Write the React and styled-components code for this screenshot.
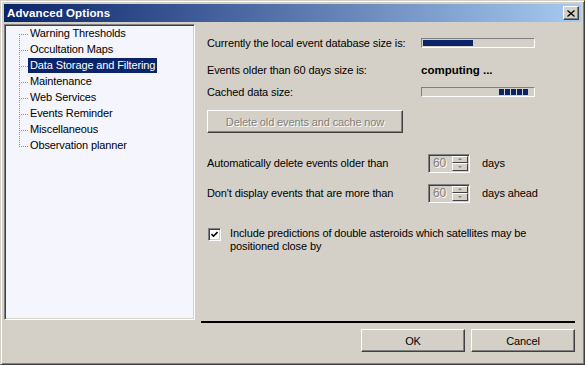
import styled, { createGlobalStyle } from 'styled-components';

const GlobalStyle = createGlobalStyle`
  html, body {
    margin: 0;
    padding: 0;
    background: #d4d0c8;
  }
  body {
    font-family: "Liberation Sans", Arial, sans-serif;
    font-size: 11px;
    letter-spacing: -0.12px;
    color: #000;
  }
`;

const Window = styled.div`
  width: 585px;
  height: 365px;
  box-sizing: border-box;
  display: flex;
  flex-direction: column;
  background: #d4d0c8;
  border: 1px solid;
  border-color: #d4d0c8 #404040 #404040 #d4d0c8;
  box-shadow: inset 1px 1px #fff, inset -1px -1px #808080;
  padding: 3px;
`;

const TitleBar = styled.div`
  height: 18px;
  flex: none;
  display: flex;
  align-items: center;
  justify-content: space-between;
  padding: 0 2px 0 3px;
  background: linear-gradient(to right, #0a246a, #a6caf0);
`;

const Title = styled.span`
  color: #fff;
  font-weight: 700;
  font-size: 11.5px;
  letter-spacing: 0.1px;
`;

const CloseButton = styled.button`
  width: 16px;
  height: 14px;
  padding: 0;
  display: flex;
  align-items: center;
  justify-content: center;
  background: #d4d0c8;
  border: 1px solid;
  border-color: #fff #404040 #404040 #fff;
  box-shadow: inset -1px -1px #808080;
`;

const Body = styled.div`
  flex: 1;
  display: flex;
  padding-top: 2px;
  min-height: 0;
`;

const Tree = styled.ul`
  width: 191px;
  height: 296px;
  box-sizing: border-box;
  flex: none;
  margin: 0;
  list-style: none;
  padding: 1px 0 0 14px;
  background: #f4f5fd;
  border: 1px solid;
  border-color: #808080 #fff #fff #808080;
  box-shadow: inset 1px 1px #404040, inset -1px -1px #d4d0c8;
`;

const TreeItem = styled.li`
  display: flex;
  align-items: flex-start;
  height: 16px;
`;

const Connector = styled.span`
  width: 9px;
  height: 16px;
  flex: none;
  background-image:
    repeating-linear-gradient(to right, #909090 0 1px, transparent 1px 2px),
    repeating-linear-gradient(to bottom, #909090 0 1px, transparent 1px 2px);
  background-size: 9px 1px, 1px ${(p) => (p.$first || p.$last ? 8 : 16)}px;
  background-position: 0 8px, 0 ${(p) => (p.$first ? 8 : 0)}px;
  background-repeat: no-repeat;
`;

const ItemLabel = styled.span`
  height: 15px;
  line-height: 15px;
  padding: 0 2px;
  white-space: nowrap;
  background: ${(p) => (p.$selected ? '#0a246a' : 'transparent')};
  color: ${(p) => (p.$selected ? '#fff' : '#000')};
`;

const RightPane = styled.div`
  flex: 1;
  display: flex;
  flex-direction: column;
`;

const Content = styled.div`
  flex: 1;
  padding: 9px 0 0 12px;
`;

const Row = styled.div`
  display: flex;
  align-items: center;
  height: 20px;
  margin-top: ${(p) => p.$mt || 0}px;
  white-space: nowrap;
`;

const Label = styled.span`
  width: ${(p) => p.$w}px;
  flex: none;
`;

const Computing = styled.span`
  font-weight: 700;
  font-size: 11.5px;
  letter-spacing: 0;
`;

const Progress = styled.div`
  width: 114px;
  height: 10px;
  box-sizing: border-box;
  padding: 1px;
  display: flex;
  justify-content: ${(p) => (p.$end ? 'flex-end' : 'flex-start')};
  gap: 1px;
  border: 1px solid;
  border-color: #808080 #fff #fff #808080;
`;

const ProgressFill = styled.div`
  height: 100%;
  background: #0a246a;
`;

const Chunk = styled.div`
  width: 5px;
  height: 100%;
  background: #0a246a;
`;

const ChunkTrail = styled.div`
  width: 4px;
`;

const Button = styled.button`
  width: ${(p) => p.$w}px;
  height: 23px;
  box-sizing: border-box;
  padding: 0;
  margin-top: ${(p) => p.$mt || 0}px;
  font-family: "Liberation Sans", Arial, sans-serif;
  font-size: 11px;
  letter-spacing: -0.12px;
  background: #d4d0c8;
  color: ${(p) => (p.disabled ? '#808080' : '#000')};
  text-shadow: ${(p) => (p.disabled ? '1px 1px #fff' : 'none')};
  border: 1px solid;
  border-color: #fff #404040 #404040 #fff;
  box-shadow: inset -1px -1px #808080;
`;

const SpinBox = styled.div`
  width: 42px;
  height: 19px;
  box-sizing: border-box;
  padding: 1px;
  display: flex;
  flex: none;
  margin-right: 12px;
  border: 1px solid;
  border-color: #808080 #fff #fff #808080;
  box-shadow: inset 1px 1px #404040, inset -1px -1px #d4d0c8;
`;

const SpinValue = styled.span`
  flex: 1;
  padding-left: 3px;
  line-height: 15px;
  font-size: 12px;
  color: #808080;
  text-shadow: 1px 1px #fff;
`;

const SpinButtons = styled.div`
  width: 16px;
  display: flex;
  flex-direction: column;
`;

const SpinButton = styled.div`
  flex: 1;
  display: flex;
  align-items: center;
  justify-content: center;
  background: #d4d0c8;
  border-top: 1px solid #fff;
  border-left: 1px solid #fff;
  border-right: 1px solid #404040;
  border-bottom: 1px solid #404040;
  box-sizing: border-box;
`;

const Arrow = styled.span`
  width: 0;
  height: 0;
  border-left: 2px solid transparent;
  border-right: 2px solid transparent;
  ${(p) => (p.$down ? 'border-top: 2px solid #808080;' : 'border-bottom: 2px solid #808080;')}
`;

const CheckRow = styled.div`
  display: flex;
  align-items: flex-start;
  margin-top: ${(p) => p.$mt}px;
`;

const CheckBox = styled.span`
  width: 13px;
  height: 13px;
  box-sizing: border-box;
  flex: none;
  margin: 1px 9px 0 1px;
  display: flex;
  align-items: center;
  justify-content: center;
  background: #fff;
  border: 1px solid;
  border-color: #808080 #fff #fff #808080;
  box-shadow: inset 1px 1px #404040, inset -1px -1px #d4d0c8;
`;

const CheckText = styled.span`
  width: 305px;
  line-height: 13px;
`;

const Separator = styled.div`
  height: 2px;
  flex: none;
  margin: 0 6px;
  background: #000;
`;

const ButtonBar = styled.div`
  display: flex;
  justify-content: flex-end;
  gap: 6px;
  padding: 6px 6px 9px 0;
`;

const treeItems = [
  'Warning Thresholds',
  'Occultation Maps',
  'Data Storage and Filtering',
  'Maintenance',
  'Web Services',
  'Events Reminder',
  'Miscellaneous',
  'Observation planner',
];

const Spin = ({ value }) => (
  <SpinBox>
    <SpinValue>{value}</SpinValue>
    <SpinButtons>
      <SpinButton>
        <Arrow />
      </SpinButton>
      <SpinButton>
        <Arrow $down />
      </SpinButton>
    </SpinButtons>
  </SpinBox>
);

const App = () => {
  const selected = 2;
  return (
    <>
      <GlobalStyle />
      <Window>
        <TitleBar>
          <Title>Advanced Options</Title>
          <CloseButton aria-label="close">
            <svg width="8" height="7" viewBox="0 0 8 7">
              <path d="M0.5 0.5 L7.5 6.5 M7.5 0.5 L0.5 6.5" stroke="#000" strokeWidth="1.3" />
            </svg>
          </CloseButton>
        </TitleBar>
        <Body>
          <Tree>
            {treeItems.map((item, i) => (
              <TreeItem key={item}>
                <Connector $first={i === 0} $last={i === treeItems.length - 1} />
                <ItemLabel $selected={i === selected}>{item}</ItemLabel>
              </TreeItem>
            ))}
          </Tree>
          <RightPane>
            <Content>
              <Row>
                <Label $w={214}>Currently the local event database size is:</Label>
                <Progress>
                  <ProgressFill style={{ width: '45%' }} />
                </Progress>
              </Row>
              <Row $mt={7}>
                <Label $w={214}>Events older than 60 days size is:</Label>
                <Computing>computing ...</Computing>
              </Row>
              <Row $mt={2}>
                <Label $w={214}>Cached data size:</Label>
                <Progress $end>
                  <Chunk />
                  <Chunk />
                  <Chunk />
                  <Chunk />
                  <Chunk />
                  <ChunkTrail />
                </Progress>
              </Row>
              <Button $w={196} $mt={8} disabled>
                Delete old events and cache now
              </Button>
              <Row $mt={20}>
                <Label $w={221}>Automatically delete events older than</Label>
                <Spin value="60" />
                <span>days</span>
              </Row>
              <Row $mt={10}>
                <Label $w={221}>Don't display events that are more than</Label>
                <Spin value="60" />
                <span>days ahead</span>
              </Row>
              <CheckRow $mt={24}>
                <CheckBox>
                  <svg width="7" height="7" viewBox="0 0 7 7">
                    <path d="M0.5 3 L2.5 5.2 L6.5 1" stroke="#000" strokeWidth="1.6" fill="none" />
                  </svg>
                </CheckBox>
                <CheckText>
                  Include predictions of double asteroids which satellites may be positioned close by
                </CheckText>
              </CheckRow>
            </Content>
            <Separator />
            <ButtonBar>
              <Button $w={104}>OK</Button>
              <Button $w={104}>Cancel</Button>
            </ButtonBar>
          </RightPane>
        </Body>
      </Window>
    </>
  );
};

export default App;
